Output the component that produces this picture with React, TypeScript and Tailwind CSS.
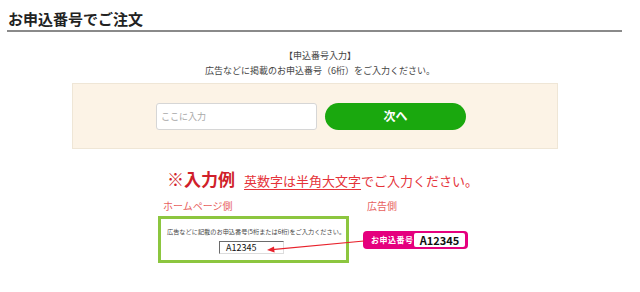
// Order-by-application-number page
export default function App() {
  return (
    <div className="relative w-[640px] h-[292px] overflow-hidden bg-white font-['Noto_Sans_CJK_JP',sans-serif] text-[#333]">
      <header className="ml-[7px] w-[615px] pt-[8px] border-b-2 border-[#8a8a8a]">
        <h1 className="pl-[1px] pb-[1px] text-[15px] leading-[21px] font-bold text-[#222]">
          お申込番号でご注文
        </h1>
      </header>

      <div className="mt-[16px] text-center text-[9px] leading-[15px] text-[#444]">
        <p>【申込番号入力】</p>
        <p>広告などに掲載のお申込番号（6桁）をご入力ください。</p>
      </div>

      <div className="mt-[5px] ml-[72px] w-[486px] h-[66px] flex items-center pl-[83px] gap-[8px] border border-[#efe6d6] bg-[#fcf3e6]">
        <input
          type="text"
          placeholder="ここに入力"
          className="w-[161px] h-[27px] rounded-[3px] border border-[#d6d6d6] bg-white pl-[4px] text-[9px] placeholder:text-[#a9a9a9] outline-none"
        />
        <button className="w-[141px] h-[27px] rounded-full bg-[#1aa80e] text-white text-[12px] font-bold">
          次へ
        </button>
      </div>

      <div className="mt-[18px] pl-[167px] flex items-baseline h-[24px]">
        <span className="text-[17px] leading-[24px] font-bold text-[#d01f2b]">※入力例</span>
        <span className="ml-[9px] text-[13px] leading-[24px] text-[#e5333a]">
          <span className="underline decoration-1 underline-offset-[3px]">英数字は半角大文字</span>
          でご入力ください。
        </span>
      </div>

      <div className="mt-[8px] flex">
        <div className="ml-[158px] w-[191px]">
          <p className="pl-[5px] text-[10px] leading-[14px] text-[#e8615e]">ホームページ側</p>
          <div className="mt-[3px] border-[3px] border-[#8cc63f] pt-[8px] pb-[6px]">
            <p className="pl-[6px] text-[6.2px] leading-[10px] text-[#444] whitespace-nowrap">
              広告などに記載のお申込番号(5桁または6桁)をご入力ください。
            </p>
            <div className="mt-[4px] ml-[58px] w-[65px] h-[13px] flex items-center pl-[6px] border border-[#dcdcdc] border-t-[#6b6b6b] border-l-[#6b6b6b] text-[9px] text-[#111]">
              A12345
            </div>
          </div>
        </div>

        <div className="ml-[14px]">
          <p className="pl-[4px] text-[10px] leading-[14px] text-[#e8615e]">広告側</p>
          <div className="mt-[18px] w-[105px] h-[18px] flex items-center rounded-[4px] bg-[#e5007e] pl-[8px] pr-[3px]">
            <span className="text-[8px] font-bold tracking-[0.5px] text-white whitespace-nowrap">お申込番号</span>
            <span className="ml-auto w-[51px] h-[14px] flex items-center justify-center rounded-[2px] bg-white text-[11px] font-bold text-[#111]">
              A12345
            </span>
          </div>
        </div>
      </div>

      <svg className="absolute left-0 top-0 pointer-events-none" width="640" height="292">
        <line x1="364" y1="241" x2="272" y2="249.6" stroke="#e8222c" strokeWidth="1.2" />
        <path d="M267 250 L274 246.6 L274.6 252.6 Z" fill="#e8222c" />
      </svg>
    </div>
  );
}
